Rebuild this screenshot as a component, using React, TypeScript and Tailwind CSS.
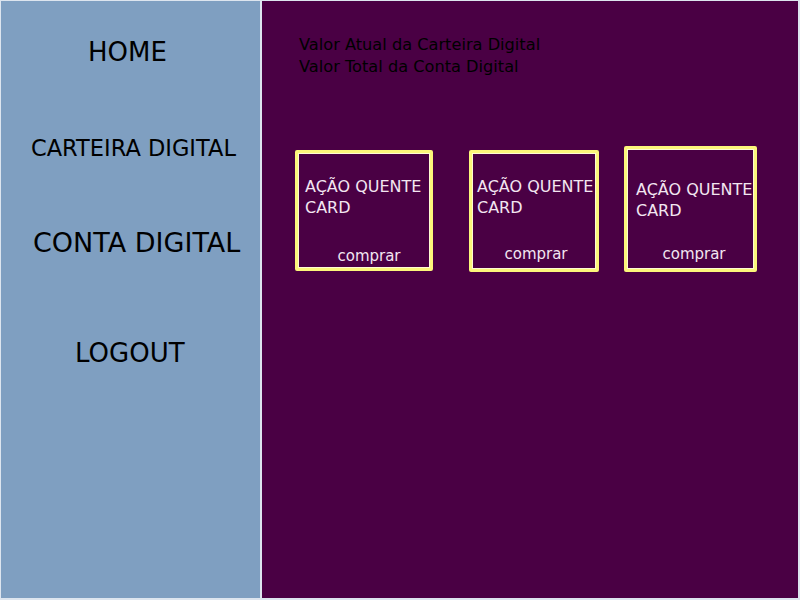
const NAV = [
  { label: 'HOME', cls: 'mt-[36px] pl-[87px] text-[26px] leading-[30px]' },
  { label: 'CARTEIRA DIGITAL', cls: 'mt-[68px] pl-[30px] text-[22.5px] leading-[27px]' },
  { label: 'CONTA DIGITAL', cls: 'mt-[65px] pl-[32px] text-[27px] leading-[31px]' },
  { label: 'LOGOUT', cls: 'mt-[80px] pl-[74px] text-[26px] leading-[30px]' },
]

const CARDS = [
  { box: 'mt-[4px] w-[138px] h-[121px]', body: 'pt-[23px] pl-[7px]', buy: 'pb-[3px] pl-[10px]' },
  { box: 'mt-[4px] ml-[36px] w-[130px] h-[122px]', body: 'pt-[23px] pl-[5px]', buy: 'pb-[6px] pl-[4px]' },
  { box: 'ml-[25px] w-[133px] h-[126px]', body: 'pt-[30px] pl-[9px]', buy: 'pb-[6px] pl-[7px]' },
]

export default function App() {
  return (
    <div
      className="flex h-[600px] w-[800px] gap-[2px] bg-[#dde5ef] pl-px pt-px pb-[2px] pr-[2px]"
      style={{ fontFamily: '"DejaVu Sans", Verdana, sans-serif' }}
    >
      <nav className="flex w-[259px] flex-col bg-[#7f9fc1] text-black">
        {NAV.map((item) => (
          <a key={item.label} href="#" className={`block ${item.cls}`}>
            {item.label}
          </a>
        ))}
      </nav>

      <main className="flex-1 bg-[#4a0044]">
        <div className="pl-[37px] pt-[33px] text-[16.2px] leading-[22px] text-black">
          <p>Valor Atual da Carteira Digital</p>
          <p>Valor Total da Conta Digital</p>
        </div>

        <div className="mt-[68px] flex items-start pl-[33px]">
          {CARDS.map((card, i) => (
            <div
              key={i}
              className={`flex flex-col rounded-[2px] border-[3px] border-[#fcf67a] shadow-[inset_0_0_0_1px_#fffbd2] text-[#f3e6f1] ${card.box}`}
            >
              <p className={`text-[16px] leading-[21px] ${card.body}`}>
                AÇÃO QUENTE
                <br />
                CARD
              </p>
              <button className={`mt-auto text-center text-[15px] leading-[18px] ${card.buy}`}>
                comprar
              </button>
            </div>
          ))}
        </div>
      </main>
    </div>
  )
}
